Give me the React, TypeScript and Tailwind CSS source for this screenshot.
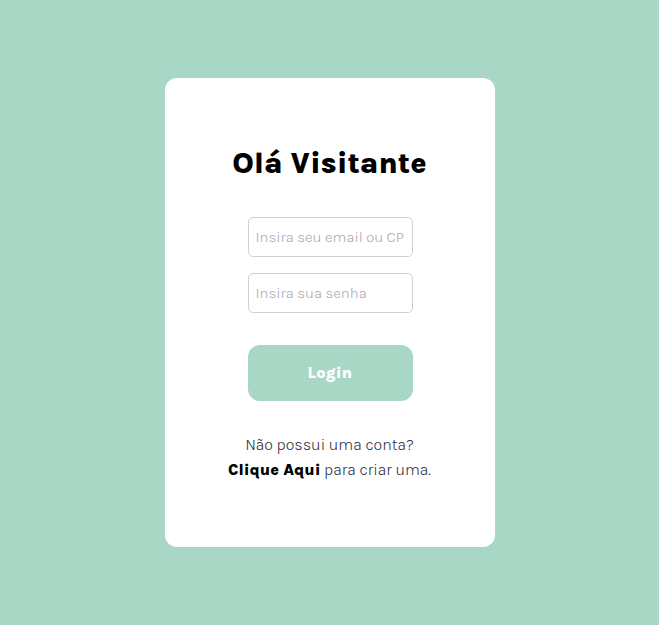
export default function App() {
  return (
    <div className="min-h-screen w-full bg-[#a8d8c5] flex items-center justify-center" style={{ fontFamily: "Karla, Lato, 'Open Sans', sans-serif" }}>
      <div className="w-[330px] h-[469px] bg-white rounded-[12px] flex flex-col items-center pt-[67px]">
        <h1 className="h-[36px] leading-[36px] text-[30px] font-extrabold tracking-[0px] text-black">Olá Visitante</h1>
        <input
          className="mt-[36px] ml-[1px] w-[165px] h-[40px] border border-[#d0d0d6] rounded-[5px] px-[7px] text-[15px] font-light placeholder:text-[#a9a6b6] outline-none"
          placeholder="Insira seu email ou CPF"
        />
        <input
          type="password"
          className="mt-[16px] ml-[1px] w-[165px] h-[40px] border border-[#d0d0d6] rounded-[5px] px-[7px] text-[15px] font-light placeholder:text-[#a9a6b6] outline-none"
          placeholder="Insira sua senha"
        />
        <button className="mt-[32px] ml-[1px] w-[165px] h-[56px] rounded-[12px] bg-[#a8d8c5] text-white font-extrabold text-[16px] tracking-[0.3px]">Login</button>
        <div className="mt-[31px] text-center text-[16px] leading-[25px] font-light text-[#2e2e3e]">
          <p>Não possui uma conta?</p>
          <p><span className="font-extrabold text-black">Clique Aqui</span> para criar uma.</p>
        </div>
      </div>
    </div>
  );
}
